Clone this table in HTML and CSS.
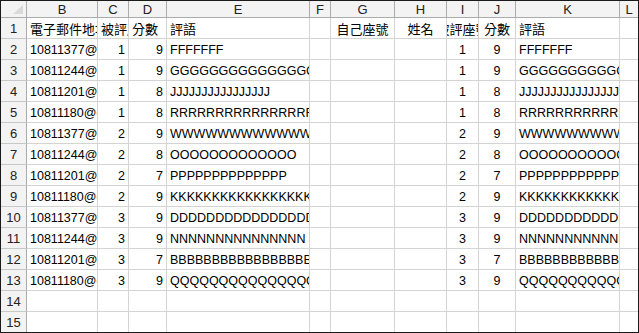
FILE: index.html
```html
<!DOCTYPE html>
<html lang="zh-Hant">
<head>
<meta charset="utf-8">
<title>Sheet</title>
<link rel="stylesheet" href="styles.css">
</head>
<body>
<div class="sheet">
  <div class="h corner"><svg class="tri" width="12" height="10" viewBox="0 0 12 10"><polygon points="11,0 11,9 1,9" fill="#d9d9d9"/></svg></div>
  <div class="h">B</div><div class="h">C</div><div class="h">D</div><div class="h">E</div><div class="h">F</div><div class="h">G</div><div class="h">H</div><div class="h">I</div><div class="h">J</div><div class="h">K</div><div class="h last">L</div>

  <div class="rh">1</div><div class="c cjk"><span>電子郵件地址</span></div><div class="c cjk"><span>被評座號</span></div><div class="c cjk"><span>分數</span></div><div class="c cjk"><span>評語</span></div><div class="c"></div><div class="c cjk m"><span>自己座號</span></div><div class="c cjk m"><span>姓名</span></div><div class="c cjk m"><span>被評座號</span></div><div class="c cjk m"><span>分數</span></div><div class="c cjk"><span>評語</span></div><div class="c last"></div>

  <div class="rh">2</div><div class="c"><span>10811377@gms.tcu.edu.tw</span></div><div class="c r">1</div><div class="c r">9</div><div class="c"><span>FFFFFFF</span></div><div class="c"></div><div class="c"></div><div class="c"></div><div class="c m">1</div><div class="c m">9</div><div class="c"><span>FFFFFFF</span></div><div class="c last"></div>

  <div class="rh">3</div><div class="c"><span>10811244@gms.tcu.edu.tw</span></div><div class="c r">1</div><div class="c r">9</div><div class="c"><span>GGGGGGGGGGGGGGGGGGGG</span></div><div class="c"></div><div class="c"></div><div class="c"></div><div class="c m">1</div><div class="c m">9</div><div class="c"><span>GGGGGGGGGGGGGGGGGGGG</span></div><div class="c last"></div>

  <div class="rh">4</div><div class="c"><span>10811201@gms.tcu.edu.tw</span></div><div class="c r">1</div><div class="c r">8</div><div class="c"><span>JJJJJJJJJJJJJJJJ</span></div><div class="c"></div><div class="c"></div><div class="c"></div><div class="c m">1</div><div class="c m">8</div><div class="c"><span>JJJJJJJJJJJJJJJJ</span></div><div class="c last"></div>

  <div class="rh">5</div><div class="c"><span>10811180@gms.tcu.edu.tw</span></div><div class="c r">1</div><div class="c r">8</div><div class="c"><span>RRRRRRRRRRRRRRRRRRRR</span></div><div class="c"></div><div class="c"></div><div class="c"></div><div class="c m">1</div><div class="c m">8</div><div class="c"><span>RRRRRRRRRRRRRRRRRRRR</span></div><div class="c last"></div>

  <div class="rh">6</div><div class="c"><span>10811377@gms.tcu.edu.tw</span></div><div class="c r">2</div><div class="c r">9</div><div class="c"><span>WWWWWWWWWWWWWWWWWWWW</span></div><div class="c"></div><div class="c"></div><div class="c"></div><div class="c m">2</div><div class="c m">9</div><div class="c"><span>WWWWWWWWWWWWWWWWWWWW</span></div><div class="c last"></div>

  <div class="rh">7</div><div class="c"><span>10811244@gms.tcu.edu.tw</span></div><div class="c r">2</div><div class="c r">8</div><div class="c"><span>OOOOOOOOOOOOO</span></div><div class="c"></div><div class="c"></div><div class="c"></div><div class="c m">2</div><div class="c m">8</div><div class="c"><span>OOOOOOOOOOOOO</span></div><div class="c last"></div>

  <div class="rh">8</div><div class="c"><span>10811201@gms.tcu.edu.tw</span></div><div class="c r">2</div><div class="c r">7</div><div class="c"><span>PPPPPPPPPPPPPP</span></div><div class="c"></div><div class="c"></div><div class="c"></div><div class="c m">2</div><div class="c m">7</div><div class="c"><span>PPPPPPPPPPPPPP</span></div><div class="c last"></div>

  <div class="rh">9</div><div class="c"><span>10811180@gms.tcu.edu.tw</span></div><div class="c r">2</div><div class="c r">9</div><div class="c"><span>KKKKKKKKKKKKKKKKKKKK</span></div><div class="c"></div><div class="c"></div><div class="c"></div><div class="c m">2</div><div class="c m">9</div><div class="c"><span>KKKKKKKKKKKKKKKKKKKK</span></div><div class="c last"></div>

  <div class="rh">10</div><div class="c"><span>10811377@gms.tcu.edu.tw</span></div><div class="c r">3</div><div class="c r">9</div><div class="c"><span>DDDDDDDDDDDDDDDDDDDD</span></div><div class="c"></div><div class="c"></div><div class="c"></div><div class="c m">3</div><div class="c m">9</div><div class="c"><span>DDDDDDDDDDDDDDDDDDDD</span></div><div class="c last"></div>

  <div class="rh">11</div><div class="c"><span>10811244@gms.tcu.edu.tw</span></div><div class="c r">3</div><div class="c r">9</div><div class="c"><span>NNNNNNNNNNNNNNN</span></div><div class="c"></div><div class="c"></div><div class="c"></div><div class="c m">3</div><div class="c m">9</div><div class="c"><span>NNNNNNNNNNNNNNN</span></div><div class="c last"></div>

  <div class="rh">12</div><div class="c"><span>10811201@gms.tcu.edu.tw</span></div><div class="c r">3</div><div class="c r">7</div><div class="c"><span>BBBBBBBBBBBBBBBBBBBB</span></div><div class="c"></div><div class="c"></div><div class="c"></div><div class="c m">3</div><div class="c m">7</div><div class="c"><span>BBBBBBBBBBBBBBBBBBBB</span></div><div class="c last"></div>

  <div class="rh">13</div><div class="c"><span>10811180@gms.tcu.edu.tw</span></div><div class="c r">3</div><div class="c r">9</div><div class="c"><span>QQQQQQQQQQQQQQQQQQQQ</span></div><div class="c"></div><div class="c"></div><div class="c"></div><div class="c m">3</div><div class="c m">9</div><div class="c"><span>QQQQQQQQQQQQQQQQQQQQ</span></div><div class="c last"></div>

  <div class="rh">14</div><div class="c"></div><div class="c"></div><div class="c"></div><div class="c"></div><div class="c"></div><div class="c"></div><div class="c"></div><div class="c"></div><div class="c"></div><div class="c"></div><div class="c last"></div>

  <div class="rh end">15</div><div class="c end"></div><div class="c end"></div><div class="c end"></div><div class="c end"></div><div class="c end"></div><div class="c end"></div><div class="c end"></div><div class="c end"></div><div class="c end"></div><div class="c end"></div><div class="c last end"></div>
</div>
</body>
</html>
```

FILE: styles.css
```css
* { box-sizing: border-box; }
html, body { margin: 0; padding: 0; background: #ffffff; }
.sheet {
  width: 639px;
  height: 333px;
  border: 1px solid #1a1a1a;
  display: grid;
  grid-template-columns: 26px 71px 31px 38px 143px 21px 64px 52px 32px 37px 104px 18px;
  grid-template-rows: 17px repeat(14, 21px) 20px;
  font-family: "Liberation Sans", Arial, "Noto Sans CJK TC", sans-serif;
  font-size: 12.5px;
  color: #000;
  overflow: hidden;
}
.h {
  background: #f3f3f3;
  border-right: 1px solid #ababab;
  border-bottom: 1px solid #ababab;
  display: flex;
  align-items: center;
  justify-content: center;
  font-size: 13px;
  color: #222;
  line-height: 16px;
  padding-top: 1px;
}
.h.last { border-right: none; }
.corner { position: relative; }
.tri { position: absolute; right: 2px; bottom: 2px; }
.rh {
  background: #f3f3f3;
  border-right: 1px solid #ababab;
  border-bottom: 1px solid #c8c8c8;
  display: flex;
  align-items: flex-end;
  justify-content: center;
  font-size: 13px;
  color: #222;
  line-height: 16px;
  padding-bottom: 1px;
}
.c {
  border-right: 1px solid #d4d4d4;
  border-bottom: 1px solid #d4d4d4;
  display: flex;
  align-items: flex-end;
  justify-content: flex-start;
  overflow: hidden;
  white-space: nowrap;
  padding: 0 3px 1px 3px;
  line-height: 16px;
}
.c span { flex: none; }
.c.r { justify-content: flex-end; }
.c.m { justify-content: center; }
.c.last { border-right: none; }
.end { border-bottom: none; }
.cjk {
  font-family: "Noto Sans CJK TC", "Liberation Sans", sans-serif;
  font-size: 13px;
}
```
